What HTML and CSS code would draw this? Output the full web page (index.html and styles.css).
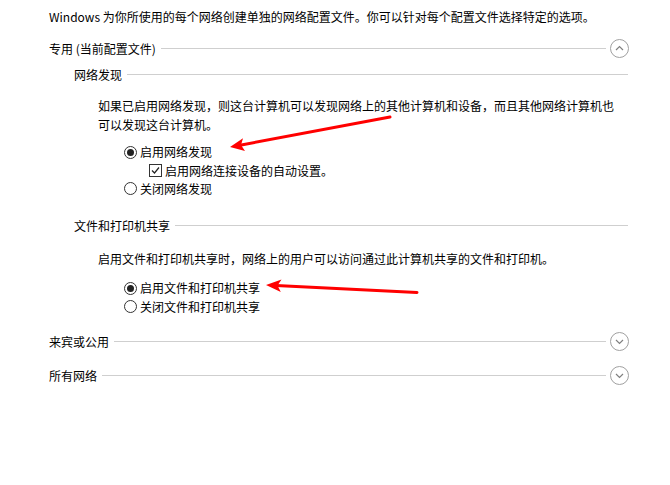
FILE: index.html
```html
<!DOCTYPE html>
<html>
<head>
    <meta charset="utf-8">
    <link rel="stylesheet" href="styles.css">
</head>
<body>
    <div class="page">
        <div class="intro">Windows 为你所使用的每个网络创建单独的网络配置文件。你可以针对每个配置文件选择特定的选项。</div>

        <div class="group-head first">
            <span class="title">专用 (当前配置文件)</span>
            <span class="rule"></span>
            <svg class="toggle" width="19" height="19" viewBox="0 0 19 19"><circle cx="9.5" cy="9.5" r="9" fill="none" stroke="#a0a0a0"/><polyline points="6,11 9.5,7.5 13,11" fill="none" stroke="#808080" stroke-width="1.2"/></svg>
        </div>

        <div class="sub">
            <div class="sub-head">
                <span class="title">网络发现</span>
                <span class="rule"></span>
            </div>
            <div class="desc">如果已启用网络发现，则这台计算机可以发现网络上的其他计算机和设备，而且其他网络计算机也<br>可以发现这台计算机。</div>
            <div class="options">
                <div class="opt"><span class="radio on"></span>启用网络发现</div>
                <div class="opt check-row"><span class="check"><svg width="11" height="11" viewBox="0 0 11 11"><polyline points="2,5.5 4.5,8 9,2.5" fill="none" stroke="#222" stroke-width="1.2"/></svg></span>启用网络连接设备的自动设置。</div>
                <div class="opt"><span class="radio"></span>关闭网络发现</div>
            </div>

            <div class="sub-head second">
                <span class="title">文件和打印机共享</span>
                <span class="rule"></span>
            </div>
            <div class="desc desc2">启用文件和打印机共享时，网络上的用户可以访问通过此计算机共享的文件和打印机。</div>
            <div class="options options2">
                <div class="opt"><span class="radio on"></span>启用文件和打印机共享</div>
                <div class="opt"><span class="radio"></span>关闭文件和打印机共享</div>
            </div>
        </div>

        <div class="group-head guest">
            <span class="title">来宾或公用</span>
            <span class="rule"></span>
            <svg class="toggle" width="19" height="19" viewBox="0 0 19 19"><circle cx="9.5" cy="9.5" r="9" fill="none" stroke="#a0a0a0"/><polyline points="6,8 9.5,11.5 13,8" fill="none" stroke="#808080" stroke-width="1.2"/></svg>
        </div>

        <div class="group-head all">
            <span class="title">所有网络</span>
            <span class="rule"></span>
            <svg class="toggle" width="19" height="19" viewBox="0 0 19 19"><circle cx="9.5" cy="9.5" r="9" fill="none" stroke="#a0a0a0"/><polyline points="6,8 9.5,11.5 13,8" fill="none" stroke="#808080" stroke-width="1.2"/></svg>
        </div>
    </div>

    <svg class="marks" width="670" height="485" viewBox="0 0 670 485">
        <line x1="390" y1="117" x2="240" y2="145.2" stroke="#f00" stroke-width="3" stroke-linecap="round"/>
        <polygon points="230,147 245,151 241,145 243,138.3" fill="#f00"/>
        <line x1="417" y1="292.5" x2="276" y2="285.6" stroke="#f00" stroke-width="3" stroke-linecap="round"/>
        <polygon points="266,285 281.5,279.5 277.5,285.5 280.8,292" fill="#f00"/>
    </svg>
</body>
</html>
```

FILE: styles.css
```css
body {
    margin: 0;
    background: #fff;
    color: #000;
    font-family: "Noto Sans CJK SC", "Noto Sans", sans-serif;
    font-size: 12px;
}
.page {
    padding: 7px 41px 0 49px;
}
.intro {
    line-height: 20px;
}
.group-head, .sub-head {
    display: flex;
    align-items: center;
    height: 20px;
}
.group-head.first {
    margin-top: 11px;
}
.group-head.guest {
    margin-top: 16px;
}
.group-head.all {
    margin-top: 14px;
}
.title {
    white-space: nowrap;
}
.rule {
    flex: 1;
    height: 0;
    border-top: 1px solid #cfcfcf;
    margin-left: 5px;
}
.toggle {
    margin-left: 4px;
    display: block;
}
.sub {
    margin-left: 25px;
    margin-right: 1px;
}
.sub-head {
    margin-top: 6px;
}
.sub-head.second {
    margin-top: 18px;
}
.desc {
    margin: 12px 0 0 24px;
    line-height: 19px;
}
.desc2 {
    margin-top: 14px;
}
.options {
    margin: 8px 0 0 50px;
}
.options2 {
    margin-top: 10px;
}
.opt {
    display: flex;
    align-items: center;
    height: 19px;
    line-height: 19px;
}
.options .opt:last-child {
    height: 18px;
}
.radio {
    box-sizing: border-box;
    width: 13px;
    height: 13px;
    border: 1px solid #333;
    border-radius: 50%;
    margin: 1px 3px 0 0;
    position: relative;
}
.radio.on::after {
    content: "";
    position: absolute;
    left: 2px;
    top: 2px;
    width: 7px;
    height: 7px;
    border-radius: 50%;
    background: #222;
}
.check-row {
    padding-left: 25px;
    height: 18px;
}
.check {
    box-sizing: border-box;
    width: 13px;
    height: 13px;
    border: 1px solid #333;
    margin: 1px 3px 0 0;
    display: flex;
    align-items: center;
    justify-content: center;
}
.check svg {
    display: block;
}
.marks {
    position: absolute;
    left: 0;
    top: 0;
    pointer-events: none;
}
```
